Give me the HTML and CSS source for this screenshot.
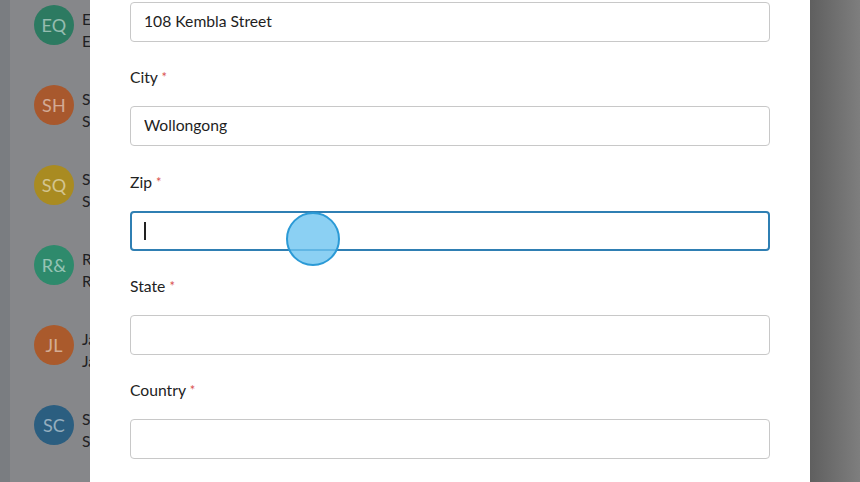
FILE: index.html
```html
<!DOCTYPE html>
<html>
<head>
<meta charset="utf-8">
<link rel="stylesheet" href="styles.css">
</head>
<body>
<div class="page">
  <aside class="sidebar">
    <div class="edge"></div>
    <ul class="people">
      <li class="person"><span class="avatar green">EQ</span><div class="info"><span class="name">Emily Quinn</span><span class="mail">Emily</span></div></li>
      <li class="person"><span class="avatar orange">SH</span><div class="info"><span class="name">Sam Hill</span><span class="mail">Sam</span></div></li>
      <li class="person"><span class="avatar yellow">SQ</span><div class="info"><span class="name">Sara Quin</span><span class="mail">Sara</span></div></li>
      <li class="person"><span class="avatar teal">R&amp;</span><div class="info"><span class="name">Ross &amp; Co</span><span class="mail">Ross</span></div></li>
      <li class="person"><span class="avatar rust">JL</span><div class="info"><span class="name">Jade Lee</span><span class="mail">Jade</span></div></li>
      <li class="person"><span class="avatar blue">SC</span><div class="info"><span class="name">Sean Cole</span><span class="mail">Sean</span></div></li>
    </ul>
  </aside>
  <main class="modal">
    <form class="form">
      <div class="field first">
        <input class="input" type="text" value="108 Kembla Street">
      </div>
      <div class="field">
        <label class="label">City <span class="req">*</span></label>
        <input class="input" type="text" value="Wollongong">
      </div>
      <div class="field">
        <label class="label">Zip <span class="req">*</span></label>
        <div class="input focused"><span class="caret"></span></div>
      </div>
      <div class="field">
        <label class="label">State <span class="req">*</span></label>
        <input class="input" type="text" value="">
      </div>
      <div class="field">
        <label class="label">Country <span class="req">*</span></label>
        <input class="input" type="text" value="">
      </div>
    </form>
    <div class="click-dot"></div>
  </main>
  <div class="backdrop-right"></div>
</div>
</body>
</html>
```
FILE: styles.css
```css
* { box-sizing: border-box; }
html, body { margin: 0; padding: 0; }
body {
  width: 860px;
  height: 482px;
  overflow: hidden;
  font-family: "Lato", "Open Sans", sans-serif;
  color: #222;
}
.page {
  display: flex;
  width: 860px;
  height: 482px;
}
.sidebar {
  width: 90px;
  flex: none;
  display: flex;
  background: #86878a;
  overflow: hidden;
}
.edge {
  width: 10px;
  flex: none;
  background: #7a7d81;
}
.people {
  list-style: none;
  margin: 0;
  padding: 5px 0 0 24px;
  display: flex;
  flex-direction: column;
  gap: 40px;
}
.person {
  display: flex;
  align-items: flex-start;
  gap: 8px;
  height: 40px;
  white-space: nowrap;
}
.avatar {
  width: 40px;
  height: 40px;
  border-radius: 50%;
  flex: none;
  display: flex;
  align-items: center;
  justify-content: center;
  font-size: 18px;
  color: rgba(255,255,255,0.5);
  font-weight: 400;
  letter-spacing: 0.2px;
}
.green { background: #2c7a61; }
.orange { background: #a8582d; }
.yellow { background: #a98b21; }
.teal { background: #2e8a6c; }
.rust { background: #aa5a2c; }
.blue { background: #2b5e80; }
.info {
  display: flex;
  flex-direction: column;
  font-size: 15.5px;
  color: #1f2123;
  line-height: 22px;
  padding-top: 3px;
}
.modal {
  position: relative;
  width: 720px;
  flex: none;
  background: #fff;
  padding: 0 40px;
}
.form {
  display: flex;
  flex-direction: column;
}
.field {
  display: flex;
  flex-direction: column;
  margin-top: 26.3px;
}
.field.first { margin-top: 2px; }
.label {
  display: block;
  height: 18px;
  font-size: 15.7px;
  line-height: 18px;
  color: #222;
  margin-bottom: 20px;
}
.req {
  color: #d9534f;
  font-size: 13px;
  line-height: 1;
  vertical-align: top;
  position: relative;
  top: 3px;
}
.input {
  display: block;
  width: 640px;
  height: 40px;
  border: 1px solid #c8c8c8;
  border-radius: 4px;
  padding: 0 13px 3px;
  font-family: inherit;
  font-size: 15.7px;
  color: #1e1e1e;
  background: #fff;
  outline: none;
}
.input.focused {
  border: 2px solid #2f7fb3;
  display: flex;
  align-items: center;
  padding: 0 0 0 12px;
}
.caret {
  width: 1.5px;
  height: 18px;
  background: #222;
}
.click-dot {
  position: absolute;
  left: 196px;
  top: 212px;
  width: 54px;
  height: 54px;
  border-radius: 50%;
  background: rgba(110, 196, 240, 0.8);
  border: 2px solid #2b9ad6;
}
.backdrop-right {
  flex: 1;
  background: linear-gradient(to right, #5f5f5f, #7e7e7e);
}
```
